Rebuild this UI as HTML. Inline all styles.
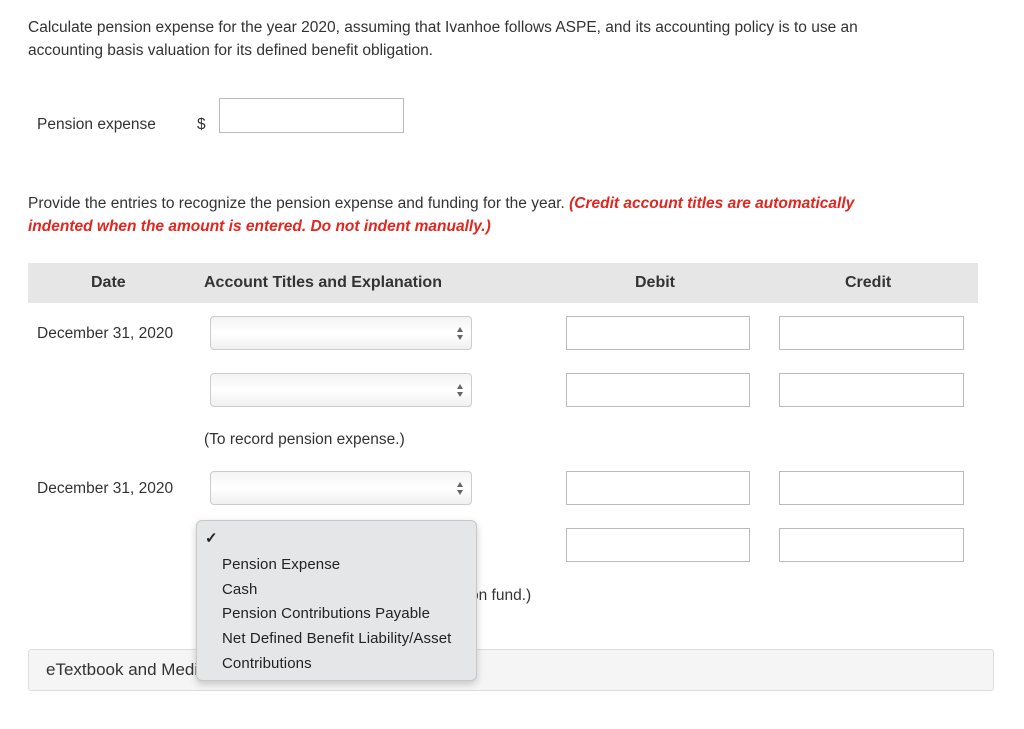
<!DOCTYPE html>
<html><head><style>
body{margin:0;background:#fff;font-family:"Liberation Sans",sans-serif;color:#333;width:1024px;height:729px;position:relative;overflow:hidden}
.a{position:absolute}
.t{font-size:15.5px;line-height:23px}
.sel{position:absolute;left:210px;width:262px;height:34px;border:1px solid #ccc;border-radius:4px;background:linear-gradient(#f4f4f4,#fff 50%,#f0f0f0);box-sizing:border-box}
.sel:after{content:"";position:absolute;right:8px;top:10px;width:0;height:0;border-left:3px solid transparent;border-right:3px solid transparent;border-bottom:5px solid #666}
.sel:before{content:"";position:absolute;right:8px;top:18px;width:0;height:0;border-left:3px solid transparent;border-right:3px solid transparent;border-top:5px solid #666}
.in{position:absolute;height:34px;border:1px solid #bbb;box-sizing:border-box;background:#fff}
.d{left:566px;width:184px}.c{left:779px;width:185px}
</style></head><body>
<div class="a t" style="left:28px;top:16px;width:895px">Calculate pension expense for the year 2020, assuming that Ivanhoe follows ASPE, and its accounting policy is to use an accounting basis valuation for its defined benefit obligation.</div>
<div class="a t" style="left:37px;top:113px">Pension expense</div>
<div class="a t" style="left:197px;top:113px">$</div>
<div class="in" style="left:219px;top:98px;width:185px;height:35px"></div>
<div class="a t" style="left:28px;top:192px;width:880px">Provide the entries to recognize the pension expense and funding for the year. <b style="color:#e0261f;font-style:italic">(Credit account titles are automatically indented when the amount is entered. Do not indent manually.)</b></div>
<div class="a" style="left:28px;top:263px;width:950px;height:40px;background:#e6e6e6;font-weight:bold;font-size:16px;line-height:40px">
<span class="a" style="left:63px">Date</span><span class="a" style="left:176px">Account Titles and Explanation</span><span class="a" style="left:607px">Debit</span><span class="a" style="left:817px">Credit</span></div>
<div class="a t" style="left:37px;top:322px">December 31, 2020</div>
<div class="sel" style="top:316px"></div><div class="in d" style="top:316px"></div><div class="in c" style="top:316px"></div>
<div class="sel" style="top:373px"></div><div class="in d" style="top:373px"></div><div class="in c" style="top:373px"></div>
<div class="a t" style="left:204px;top:428px">(To record pension expense.)</div>
<div class="a t" style="left:37px;top:477px">December 31, 2020</div>
<div class="sel" style="top:471px"></div><div class="in d" style="top:471px"></div><div class="in c" style="top:471px"></div>
<div class="in d" style="top:528px"></div><div class="in c" style="top:528px"></div>
<div class="a t" style="left:470px;top:584px">on fund.)</div>
<div class="a" style="left:28px;top:649px;width:966px;height:42px;background:#f5f5f5;border:1px solid #ddd;box-sizing:border-box;border-radius:3px;font-size:17px;line-height:40px;padding-left:17px">eTextbook and Media</div>
<div class="a" style="left:196px;top:520px;width:281px;height:161px;background:#e4e6e8;border:1px solid #c8c8c8;border-radius:6px;box-sizing:border-box;box-shadow:0 3px 8px rgba(0,0,0,.2);font-size:15px;color:#222">
<div class="a" style="left:8px;top:8px;font-size:15px;font-weight:bold">✓</div>
<div class="a" style="left:25px;top:32px;line-height:24.7px;letter-spacing:0.1px">Pension Expense<br>Cash<br>Pension Contributions Payable<br>Net Defined Benefit Liability/Asset<br>Contributions</div>
</div>
</body></html>
